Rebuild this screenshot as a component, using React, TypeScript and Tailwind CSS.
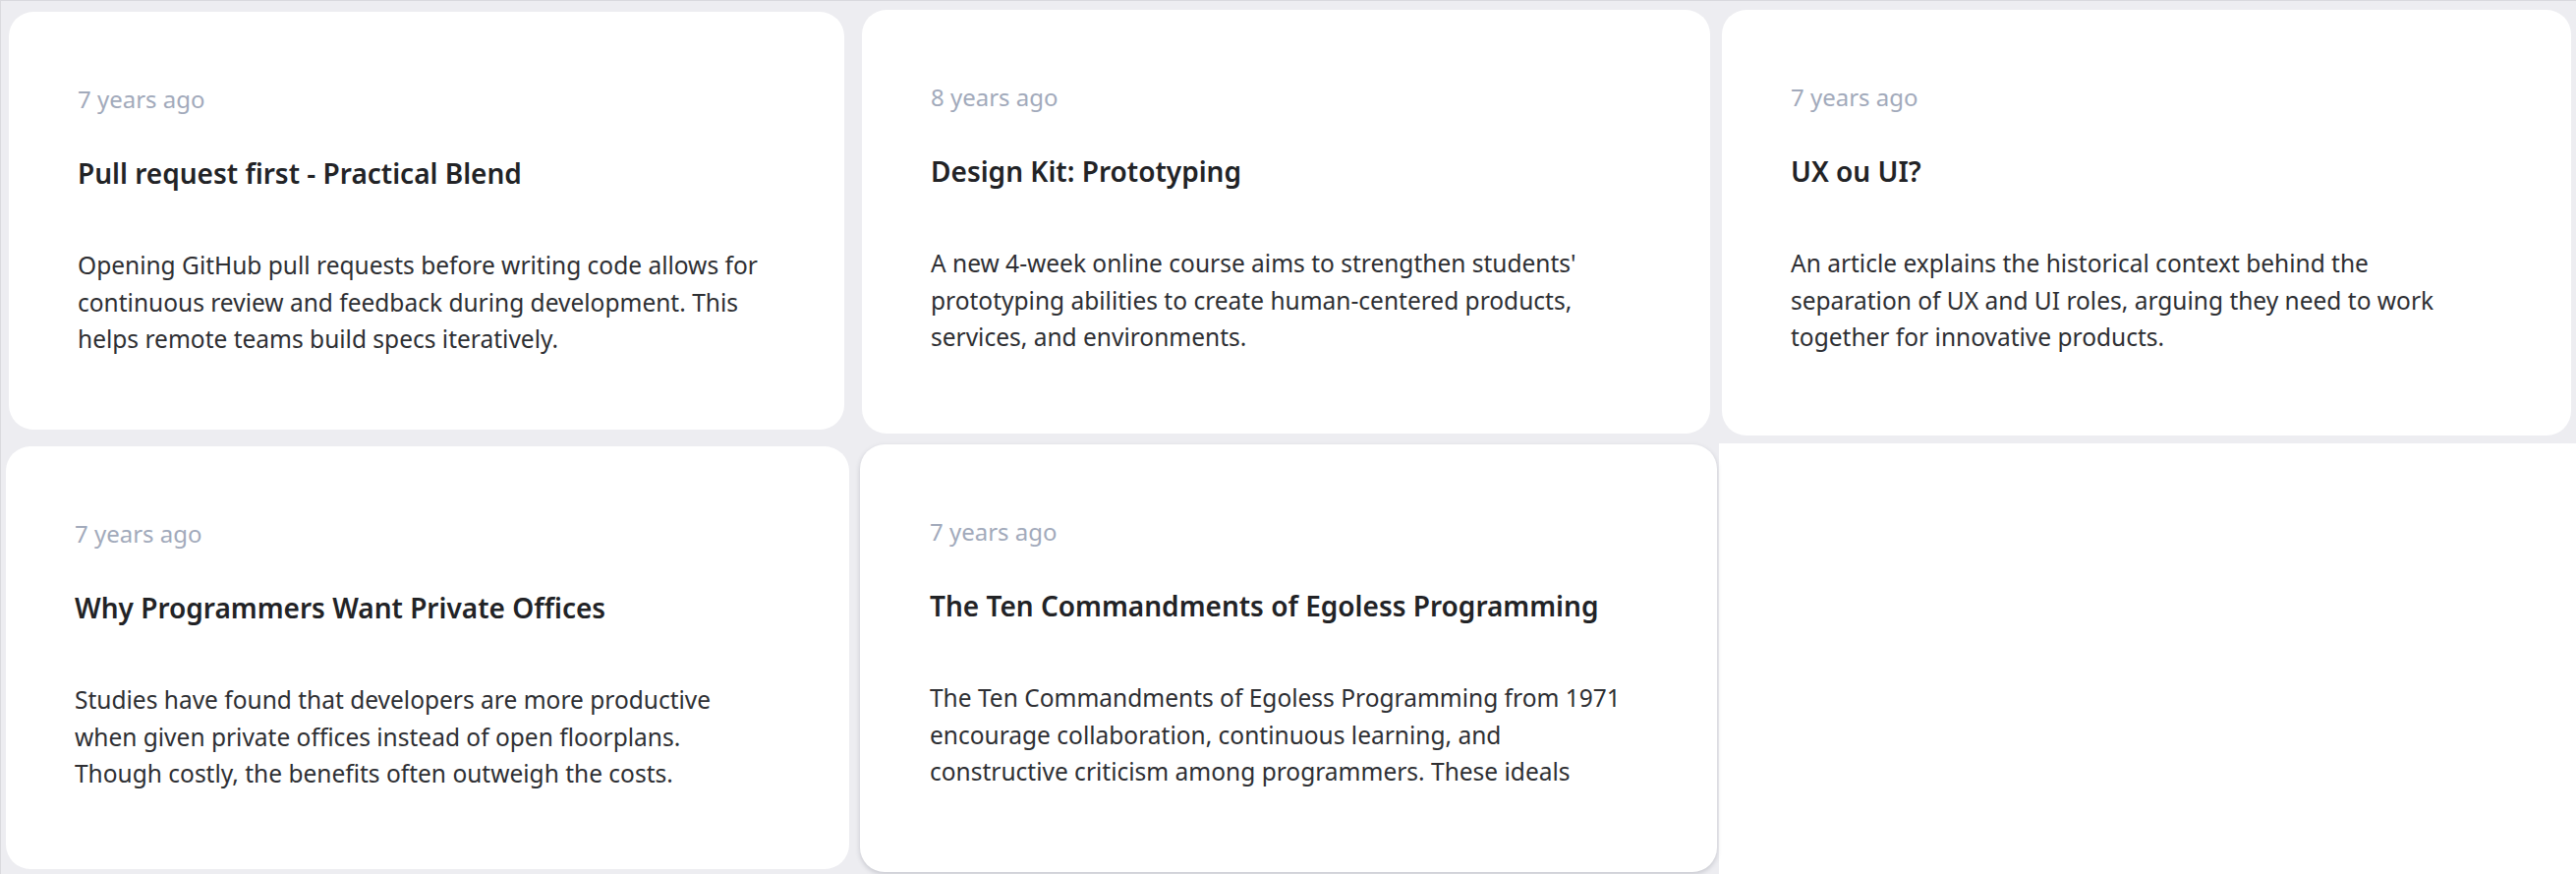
import React from "react";

type Card = {
  ago: string;
  title: string;
  lines: string[];
  cls: string;
  pad: string;
};

const row1: Card[] = [
  {
    ago: "7 years ago",
    title: "Pull request first - Practical Blend",
    lines: [
      "Opening GitHub pull requests before writing code allows for",
      "continuous review and feedback during development. This",
      "helps remote teams build specs iteratively.",
    ],
    cls: "ml-[8px] mt-[11px] w-[850px] h-[425px]",
    pad: "pl-[70px]",
  },
  {
    ago: "8 years ago",
    title: "Design Kit: Prototyping",
    lines: [
      "A new 4-week online course aims to strengthen students'",
      "prototyping abilities to create human-centered products,",
      "services, and environments.",
    ],
    cls: "ml-[18px] mt-[9px] w-[863px] h-[431px]",
    pad: "pl-[70px]",
  },
  {
    ago: "7 years ago",
    title: "UX ou UI?",
    lines: [
      "An article explains the historical context behind the",
      "separation of UX and UI roles, arguing they need to work",
      "together for innovative products.",
    ],
    cls: "ml-[12px] mt-[9px] w-[864px] h-[433px]",
    pad: "pl-[70px]",
  },
];

const row2: Card[] = [
  {
    ago: "7 years ago",
    title: "Why Programmers Want Private Offices",
    lines: [
      "Studies have found that developers are more productive",
      "when given private offices instead of open floorplans.",
      "Though costly, the benefits often outweigh the costs.",
    ],
    cls: "ml-[5px] mt-[3px] w-[858px] h-[430px]",
    pad: "pl-[70px]",
  },
  {
    ago: "7 years ago",
    title: "The Ten Commandments of Egoless Programming",
    lines: [
      "The Ten Commandments of Egoless Programming from 1971",
      "encourage collaboration, continuous learning, and",
      "constructive criticism among programmers. These ideals",
    ],
    cls: "ml-[11px] mt-[1px] w-[872px] h-[435px] shadow-[0_2px_5px_rgba(60,64,80,0.22)]",
    pad: "pl-[71px]",
  },
];

function ArticleCard({ c }: { c: Card }) {
  return (
    <div className={`shrink-0 rounded-[25px] bg-white pt-[73px] pr-[30px] ${c.pad} ${c.cls}`}>
      <div className="text-[24px] leading-[32px] text-[#a2aabb]">{c.ago}</div>
      <div className="mt-[41px] text-[28px] leading-[36px] font-semibold text-[#222326]">{c.title}</div>
      <p className="mt-[57px] text-[24.5px] leading-[37.5px] text-[#2e2f33] whitespace-nowrap">
        {c.lines.map((l, i) => (
          <span key={i} className="block">
            {l}
          </span>
        ))}
      </p>
    </div>
  );
}

export default function App() {
  return (
    <div className="w-[2621px] h-[889px] overflow-hidden bg-white font-['Noto_Sans',sans-serif]">
      <div className="flex h-[451px] bg-[#ededf1] border-t border-l border-[#d9d9de]">
        {row1.map((c, i) => (
          <ArticleCard key={i} c={c} />
        ))}
      </div>
      <div className="flex">
        <div className="flex w-[1749px] h-[438px] bg-[#ededf1] border-l border-[#d9d9de]">
          {row2.map((c, i) => (
            <ArticleCard key={i} c={c} />
          ))}
        </div>
      </div>
    </div>
  );
}
